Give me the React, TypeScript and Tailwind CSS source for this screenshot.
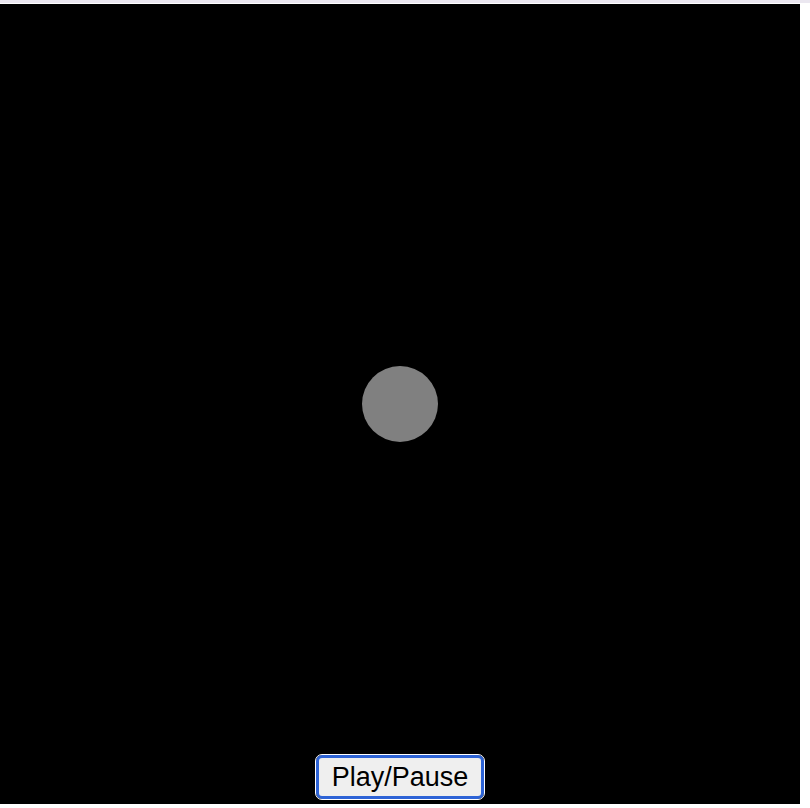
import React from "react";

export default function App() {
  return (
    <div className="w-[810px] h-[808px] bg-white" style={{ fontFamily: '"Liberation Sans", Arial, sans-serif' }}>
      <div className="h-[3px] w-full bg-[#ebe7f0]" />
      <div className="h-[1px] w-full bg-white" />
      <div className="relative w-[800px] h-[800px] bg-black flex items-center justify-center">
        <div className="w-[76px] h-[76px] rounded-full bg-[#808080]" />
        <button className="absolute bottom-[5px] left-1/2 -translate-x-1/2 w-[168px] h-[44px] rounded-[6px] border-[3px] border-[#2d63d6] bg-[#efefef] text-[27px] leading-none text-black outline outline-1 outline-white flex items-center justify-center">
          Play/Pause
        </button>
      </div>
    </div>
  );
}
